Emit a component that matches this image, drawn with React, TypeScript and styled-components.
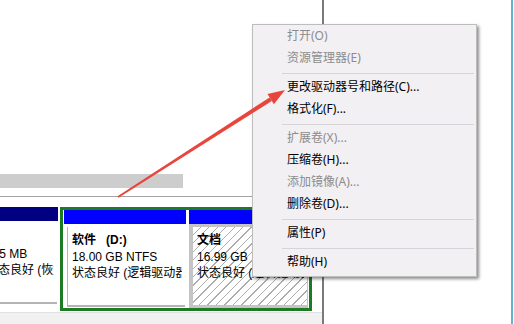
import styled, { createGlobalStyle } from 'styled-components';

const GlobalStyle = createGlobalStyle`
  html, body {
    margin: 0;
    padding: 0;
    background: #fff;
    overflow: hidden;
  }
  body {
    font-family: "Noto Sans", "Noto Sans CJK SC", sans-serif;
  }
`;

const Screen = styled.div`
  position: relative;
  width: 514px;
  height: 324px;
  display: flex;
  background: #fff;
  overflow: hidden;
`;

const DiskPane = styled.div`
  width: 322px;
  border-right: 2px solid #7a7a7a;
  display: flex;
  flex-direction: column;
  overflow: hidden;
`;

const TopSpace = styled.div`
  height: 174px;
  flex: none;
`;

const ScrollTrack = styled.div`
  height: 14px;
  flex: none;
  display: flex;
`;

const ScrollThumb = styled.div`
  width: 183px;
  background: #cdcdcd;
`;

const Rule = styled.div`
  flex: none;
  margin-top: 8px;
  height: 1px;
  background: #a3a3a3;
`;

const DiskRow = styled.div`
  flex: none;
  display: flex;
  align-items: flex-start;
  gap: 2px;
  padding-top: 10px;
  height: 115px;
  box-sizing: border-box;
`;

const Selected = styled.div`
  display: flex;
  gap: 3px;
  border: 3px solid #1f7a24;
  padding: 0 1px;
  height: 98px;
`;

const Partition = styled.div<{ $w: number; $shift?: number }>`
  width: ${p => p.$w}px;
  margin-left: ${p => -(p.$shift || 0)}px;
  display: flex;
  flex-direction: column;
  height: 98px;
  overflow: hidden;
`;

const Header = styled.div<{ $navy?: boolean }>`
  height: 14px;
  flex: none;
  background: ${p => (p.$navy ? '#000080' : '#0000ff')};
`;

const Body = styled.div<{ $hatch?: boolean }>`
  flex: 1;
  display: flex;
  padding: 3px 1px 1px 3px;
  background: ${p => (p.$hatch ? '#c4c4c4' : '#fff')};
`;

const Inner = styled.div<{ $hatch?: boolean }>`
  flex: 1;
  min-width: 0;
  padding: 5px 3px 0 4px;
  border-left: 1px solid ${p => (p.$hatch ? '#c4c4c4' : '#b4b4b4')};
  border-bottom: 2px solid ${p => (p.$hatch ? '#c4c4c4' : '#b4b4b4')};
  background: ${p =>
    p.$hatch
      ? 'repeating-linear-gradient(135deg, #fff 0 5px, #adadad 5px 6px)'
      : '#fff'};
  font-family: "Liberation Sans", "Noto Sans CJK SC", sans-serif;
  font-size: 12px;
  color: #000;
`;

const Line = styled.div<{ $bold?: boolean }>`
  height: 16.5px;
  line-height: 16.5px;
  font-weight: ${p => (p.$bold ? 700 : 400)};
  white-space: pre;
  overflow: hidden;
`;

const BottomStrip = styled.div`
  flex: 1;
  background: #f1f1f1;
  border-top: 1px solid #e2e2e2;
`;

const Blank = styled.div`
  flex: 1;
`;

const Edge = styled.div`
  width: 2px;
  margin-right: 1px;
  background: #62b3cd;
`;

const Menu = styled.div`
  position: absolute;
  left: 252px;
  top: 24px;
  width: 219px;
  padding: 0 2px 3px;
  border: 1px solid #bdbdbd;
  background: #f2f0f3;
  box-shadow: 2px 2px 3px rgba(0, 0, 0, 0.45);
  font-family: "Noto Sans", "Noto Sans CJK SC", sans-serif;
  font-size: 12px;
`;

const Item = styled.div<{ $off?: boolean }>`
  height: 22px;
  line-height: 22px;
  padding-left: 32px;
  color: ${p => (p.$off ? '#8c8c8c' : '#000')};
  white-space: nowrap;
`;

const Sep = styled.div`
  height: 1px;
  margin: 4px 0 2px 27px;
  background: #d6d4d8;
`;

const Arrow = styled.svg`
  position: absolute;
  left: 0;
  top: 0;
  pointer-events: none;
`;

const menu: (string | { t: string; off?: boolean })[] = [
  { t: '打开(O)', off: true },
  { t: '资源管理器(E)', off: true },
  '-',
  { t: '更改驱动器号和路径(C)...' },
  { t: '格式化(F)...' },
  '-',
  { t: '扩展卷(X)...', off: true },
  { t: '压缩卷(H)...' },
  { t: '添加镜像(A)...', off: true },
  { t: '删除卷(D)...' },
  '-',
  { t: '属性(P)' },
  '-',
  { t: '帮助(H)' },
];

export default function App() {
  return (
    <Screen>
      <GlobalStyle />
      <DiskPane>
        <TopSpace />
        <ScrollTrack>
          <ScrollThumb />
        </ScrollTrack>
        <Rule />
        <DiskRow>
          <Partition $w={80} $shift={22}>
            <Header $navy />
            <Body>
              <Inner>
                <Line $bold> </Line>
                <Line>495 MB</Line>
                <Line>状态良好 (恢复分区)</Line>
              </Inner>
            </Body>
          </Partition>
          <Selected>
            <Partition $w={122}>
              <Header />
              <Body>
                <Inner>
                  <Line $bold>{'软件   (D:)'}</Line>
                  <Line>18.00 GB NTFS</Line>
                  <Line>状态良好 (逻辑驱动器)</Line>
                </Inner>
              </Body>
            </Partition>
            <Partition $w={119}>
              <Header />
              <Body $hatch>
                <Inner $hatch>
                  <Line $bold>文档</Line>
                  <Line>16.99 GB</Line>
                  <Line>状态良好 (逻辑驱动器)</Line>
                </Inner>
              </Body>
            </Partition>
          </Selected>
        </DiskRow>
        <BottomStrip />
      </DiskPane>
      <Blank />
      <Edge />

      <Menu>
        {menu.map((m, i) =>
          m === '-' ? (
            <Sep key={i} />
          ) : (
            <Item key={i} $off={typeof m !== 'string' && m.off}>
              {typeof m !== 'string' && m.t}
            </Item>
          )
        )}
      </Menu>

      <Arrow width="514" height="324" viewBox="0 0 514 324">
        <polygon
          points="117.5,196.2 269.6,97.5 271.8,100.9 118.5,197.8"
          fill="#e8453c"
        />
        <polygon points="285,90 273.9,104.3 267.5,94.1" fill="#e8453c" />
      </Arrow>
    </Screen>
  );
}
